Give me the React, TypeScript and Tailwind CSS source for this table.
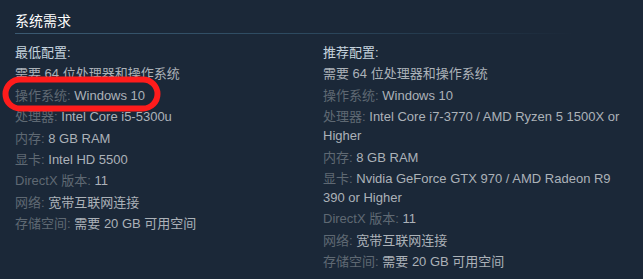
const font = { fontFamily: '"Liberation Sans", "Noto Sans CJK SC", sans-serif' };

type Row = { label?: string; value: string };

const minRows: Row[] = [
  { label: "操作系统", value: "Windows 10" },
  { label: "处理器", value: "Intel Core i5-5300u" },
  { label: "内存", value: "8 GB RAM" },
  { label: "显卡", value: "Intel HD 5500" },
  { label: "DirectX 版本", value: "11" },
  { label: "网络", value: "宽带互联网连接" },
  { label: "存储空间", value: "需要 20 GB 可用空间" },
];

const recRows: Row[] = [
  { label: "操作系统", value: "Windows 10" },
  { label: "处理器", value: "Intel Core i7-3770 / AMD Ryzen 5 1500X or Higher" },
  { label: "内存", value: "8 GB RAM" },
  { label: "显卡", value: "Nvidia GeForce GTX 970 / AMD Radeon R9 390 or Higher" },
  { label: "DirectX 版本", value: "11" },
  { label: "网络", value: "宽带互联网连接" },
  { label: "存储空间", value: "需要 20 GB 可用空间" },
];

function Column({ title, rows, width }: { title: string; rows: Row[]; width: string }) {
  return (
    <ul className={`${width} text-[13px] leading-[19px] text-[#acb2b8]`}>
      <li className="mb-[2.4px] text-[#c6d4df]">{title}</li>
      <li className="mb-[2.4px]">需要 64 位处理器和操作系统</li>
      {rows.map((r) => (
        <li key={r.label} className="mb-[2.4px]">
          <span className="text-[#5f6973]">{r.label}:</span> {r.value}
        </li>
      ))}
    </ul>
  );
}

export default function App() {
  return (
    <div className="relative w-[643px] h-[279px] overflow-hidden bg-[#1b2838]" style={font}>
      <div className="px-[15px] pt-[11px]">
        <h2 className="text-[14px] leading-[20px] pb-[2px] text-white">系统需求</h2>
        <div className="h-px w-[560px] bg-gradient-to-r from-[#3b5a72] via-[#2d4a60] to-transparent" />
        <div className="flex mt-[9px]">
          <Column title="最低配置:" rows={minRows} width="w-[308px]" />
          <Column title="推荐配置:" rows={recRows} width="w-[303px]" />
        </div>
      </div>

      {/* red marker around the OS row */}
      <svg className="absolute left-0 top-0 pointer-events-none" width="200" height="130">
        <rect x="5.5" y="79.5" width="152" height="29" rx="14.5" fill="none" stroke="#ff1c1c" strokeWidth="6" />
      </svg>
    </div>
  );
}
